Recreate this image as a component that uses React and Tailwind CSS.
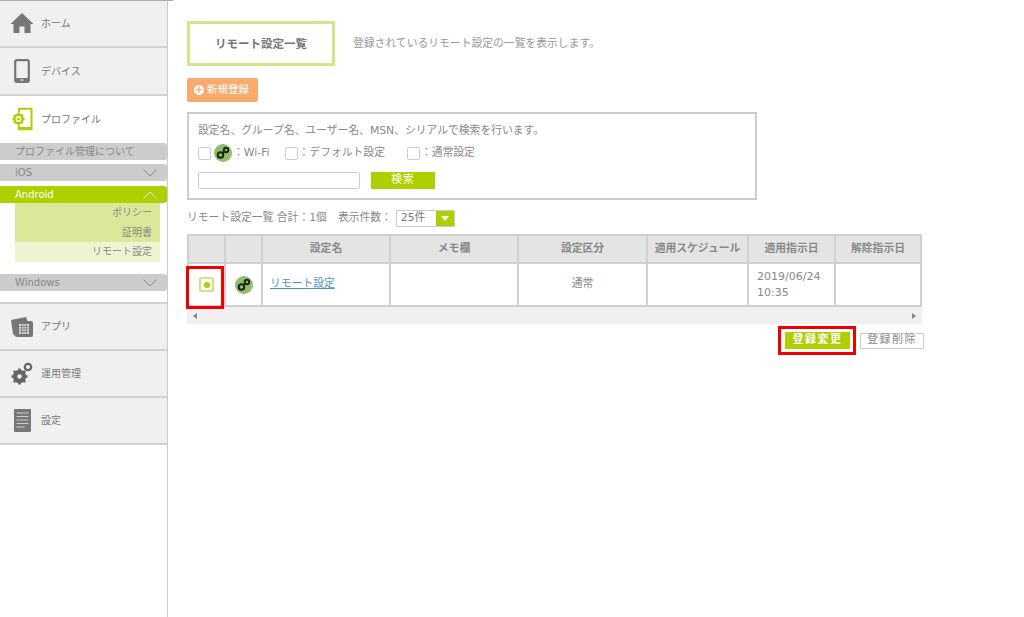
import { ChevronDown, ChevronUp } from "lucide-react";

const font = { fontFamily: '"DejaVu Sans", "Noto Sans CJK JP", sans-serif' };

function HomeIcon() {
  return (
    <svg width="24" height="22" viewBox="0 0 24 22" fill="#777">
      <path d="M12 1 L23.5 12 L20.5 12 L20.5 21 L14.5 21 L14.5 14.5 L9.5 14.5 L9.5 21 L3.5 21 L3.5 12 L0.5 12 Z" />
    </svg>
  );
}

function DeviceIcon() {
  return (
    <svg width="16" height="24" viewBox="0 0 16 24">
      <rect x="1.2" y="1.2" width="13.6" height="21.6" rx="1.5" fill="none" stroke="#777" strokeWidth="2.2" />
      <rect x="1" y="19" width="14" height="4" fill="#777" />
      <rect x="6.5" y="20.4" width="3" height="1.2" fill="#eee" />
    </svg>
  );
}

function ProfileIcon() {
  return (
    <svg width="21" height="24" viewBox="0 0 21 24">
      <path d="M7 5 V1.8 H19.5 V22.2 H7 V19" fill="none" stroke="#aecf00" strokeWidth="2" />
      <path d="M7 20h12v3H7z" fill="#aecf00" />
      <path d="M6.5 5.5v13M0.5 12h12M2.3 7.8l8.4 8.4M10.7 7.8l-8.4 8.4" stroke="#aecf00" strokeWidth="2.6" />
      <circle cx="6.5" cy="12" r="5.4" fill="#aecf00" />
      <circle cx="6.5" cy="12" r="2.9" fill="#fff" />
      <circle cx="6.5" cy="12" r="1.5" fill="#aecf00" />
    </svg>
  );
}

function AppIcon() {
  return (
    <svg width="24" height="22" viewBox="0 0 24 22">
      <path d="M1 4 L16 1 L18 6 L5 8 L5 20 L3 18 Z" fill="#777" />
      <rect x="5" y="5" width="18" height="16" rx="2" fill="#777" />
      <rect x="9" y="8" width="10" height="10" fill="#ddd" />
      <path d="M9 10.5h10M9 13h10M9 15.5h10M11.5 8v10M14 8v10M16.5 8v10" stroke="#777" strokeWidth="0.8" />
    </svg>
  );
}

function GearIcon() {
  return (
    <svg width="22" height="23" viewBox="0 0 22 23">
      <circle cx="8.5" cy="14.5" r="5" fill="none" stroke="#666" strokeWidth="3.4" />
      <path d="M8.5 6.5v16M0.5 14.5h16M2.8 8.8l11.4 11.4M14.2 8.8L2.8 20.2" stroke="#666" strokeWidth="2.6" />
      <circle cx="8.5" cy="14.5" r="2.2" fill="#eee" />
      <circle cx="17" cy="5" r="3.2" fill="none" stroke="#666" strokeWidth="2.2" />
    </svg>
  );
}

function DocIcon() {
  return (
    <svg width="17" height="23" viewBox="0 0 17 23">
      <rect width="17" height="23" rx="1" fill="#777" />
      <path d="M2.5 4h12M2.5 7.5h12M2.5 11h12M2.5 14.5h12M2.5 18h8" stroke="#ccc" strokeWidth="1" />
    </svg>
  );
}

function LinkBadge({ size = 18 }) {
  return (
    <svg width={size} height={size} viewBox="0 0 18 18">
      <circle cx="9" cy="9" r="9" fill="#8fbf6a" />
      <circle cx="6.5" cy="11" r="2.8" fill="none" stroke="#222" strokeWidth="2" />
      <circle cx="12" cy="6" r="2.2" fill="none" stroke="#222" strokeWidth="2" />
      <path d="M8.5 9 L10.5 7.5" stroke="#222" strokeWidth="2" />
    </svg>
  );
}

function NavItem({ icon, label, className = "h-[48px]" }) {
  return (
    <div className={"flex items-center bg-[#f0f0f0] border-b-2 border-[#d2d2d2] " + className}>
      <div className="w-[41px] flex justify-center pl-[3px] shrink-0">{icon}</div>
      <span className="text-[10px] text-[#777]">{label}</span>
    </div>
  );
}

function SubBar({ label, open, plain, className = "" }) {
  return (
    <div
      className={
        "flex items-center justify-between h-[17px] pl-[15px] pr-[5px] rounded-r-[3px] text-[10px] " +
        (open ? "bg-[#aecf00] text-white " : "bg-[#cccccc] text-[#888] ") +
        className
      }
    >
      <span>{label}</span>
      {!plain && (open ? <ChevronUp size={24} strokeWidth={1} color="#fff" /> : <ChevronDown size={24} strokeWidth={1} color="#888" />)}
    </div>
  );
}

function Sidebar() {
  return (
    <aside className="w-[168px] min-h-[617px] border-r border-[#cccccc] shrink-0">
      <NavItem icon={<HomeIcon />} label="ホーム" />
      <NavItem icon={<DeviceIcon />} label="デバイス" />
      <div className="flex items-center h-[46px]">
        <div className="w-[41px] flex justify-center pl-[3px] shrink-0">
          <ProfileIcon />
        </div>
        <span className="text-[10px] text-[#777]">プロファイル</span>
      </div>
      <div className="pt-[1px]">
        <SubBar label="プロファイル管理について" plain />
        <SubBar label="iOS" className="mt-[4px]" />
        <SubBar label="Android" open className="mt-[5px]" />
        <div className="ml-[15px] w-[145px] text-[10px] text-[#888] text-right">
          <div className="h-[20px] leading-[20px] pr-[8px] bg-[#dbe89a]">ポリシー</div>
          <div className="h-[19px] leading-[19px] pr-[8px] bg-[#dbe89a]">証明書</div>
          <div className="h-[20px] leading-[20px] pr-[8px] bg-[#eef4d2]">リモート設定</div>
        </div>
        <SubBar label="Windows" className="mt-[12px]" />
      </div>
      <div className="mt-[11px] border-t-2 border-[#d2d2d2]">
        <NavItem icon={<AppIcon />} label="アプリ" className="h-[47px]" />
        <NavItem icon={<GearIcon />} label="運用管理" className="h-[47px]" />
        <NavItem icon={<DocIcon />} label="設定" className="h-[47px]" />
      </div>
    </aside>
  );
}

function Check({ className = "" }) {
  return <span className={"w-[13px] h-[13px] bg-white border border-[#ccc] rounded-[2px] inline-block " + className}></span>;
}

const headers = ["", "", "設定名", "メモ欄", "設定区分", "適用スケジュール", "適用指示日", "解除指示日"];
const widths = [37, 37, 128, 128, 129, 101, 87, 84];

function Table() {
  const cell = "border-r-2 border-[#d0d0d0] last:border-r-0 shrink-0";
  return (
    <div className="w-[735px] mt-[7px]">
      <div className="flex h-[30px] bg-[#e4e4e4] border-y-2 border-x-2 border-[#d0d0d0]">
        {headers.map((h, i) => (
          <div
            key={i}
            className={"flex items-center justify-center text-[10.8px] font-bold text-[#888] " + cell}
            style={{ width: widths[i] }}
          >
            {h}
          </div>
        ))}
      </div>
      <div className="flex h-[43px] border-b-2 border-x-2 border-[#d0d0d0] text-[10.8px] text-[#888]">
        <div className={"relative flex items-center justify-center " + cell} style={{ width: widths[0] }}>
          <span className="w-[15px] h-[15px] border-2 border-[#cfe37f] rounded-[2px] flex items-center justify-center">
            <span className="w-[6px] h-[6px] rounded-full bg-[#aecf00]"></span>
          </span>
          <span className="absolute left-[-3px] top-[2px] w-[38px] h-[43px] border-[3px] border-[#f00000]"></span>
        </div>
        <div className={"flex items-center justify-center " + cell} style={{ width: widths[1] }}>
          <LinkBadge />
        </div>
        <div className={"flex items-center pl-[7px] " + cell} style={{ width: widths[2] }}>
          <a className="text-[#4d93c4] underline">リモート設定</a>
        </div>
        <div className={cell} style={{ width: widths[3] }}></div>
        <div className={"flex items-center justify-center " + cell} style={{ width: widths[4] }}>
          通常
        </div>
        <div className={cell} style={{ width: widths[5] }}></div>
        <div className={"flex items-center pl-[8px] text-[11px] leading-[16px] " + cell} style={{ width: widths[6] }}>
          2019/06/24
          <br />
          10:35
        </div>
        <div className={cell} style={{ width: widths[7] }}></div>
      </div>
      <div className="flex items-center justify-between h-[17px] px-[6px] bg-[#f0f0f0]">
        <span className="w-0 h-0 border-y-[3.5px] border-y-transparent border-r-[4px] border-r-[#888]"></span>
        <span className="w-0 h-0 border-y-[3.5px] border-y-transparent border-l-[4px] border-l-[#888]"></span>
      </div>
    </div>
  );
}

export default function App() {
  return (
    <div className="relative flex w-[1024px] h-[617px] bg-white overflow-hidden" style={font}>
      <div className="absolute top-0 left-0 w-[173px] h-[1px] bg-[#aaaaaa]"></div>
      <Sidebar />
      <main className="pl-[19px] pt-[21px] flex-1 text-[#888]">
        <div className="flex items-center">
          <div className="w-[148px] h-[45px] border-[3px] border-[#d3e48a] flex items-center justify-center pt-[2px] text-[11.5px] font-bold text-[#777]">
            リモート設定一覧
          </div>
          <p className="ml-[18px] mt-[2px] text-[10.8px] text-[#999]">登録されているリモート設定の一覧を表示します。</p>
        </div>
        <div className="mt-[12px] w-[71px] h-[24px] rounded-[2px] bg-[#f8ab6d] flex items-center pl-[7px] gap-[3px] text-[10.5px] text-white">
          <span className="w-[10px] h-[10px] rounded-full bg-white text-[#f8ab6d] flex items-center justify-center font-bold leading-none text-[10px]">+</span>
          新規登録
        </div>
        <div className="mt-[10px] w-[570px] h-[88px] border-2 border-[#cccccc] pl-[9px] pt-[9px] text-[10.8px]">
          <p className="leading-[15px]">設定名、グループ名、ユーザー名、MSN、シリアルで検索を行います。</p>
          <div className="flex items-center h-[20px] mt-[5px]">
            <Check />
            <span className="ml-[3px]"><LinkBadge /></span>
            <span className="ml-[1px]">：Wi-Fi</span>
            <Check className="ml-[15px]" />
            <span className="ml-[1px]">：デフォルト設定</span>
            <Check className="ml-[22px]" />
            <span className="ml-[1px]">：通常設定</span>
          </div>
          <div className="flex items-center mt-[9px]">
            <div className="w-[162px] h-[17px] bg-white border border-[#ccc] rounded-[2px]"></div>
            <div className="ml-[11px] w-[64px] h-[17px] bg-[#aecf00] flex items-center justify-center text-white tracking-[1px]">検索</div>
          </div>
        </div>
        <div className="flex items-center h-[17px] mt-[10px] text-[10.8px]">
          <span>リモート設定一覧 合計：1個</span>
          <span className="ml-[11px]">表示件数：</span>
          <div className="ml-[4px] w-[59px] h-[17px] border border-[#ccc] flex justify-between items-center pl-[4px]">
            <span className="text-[#777]">25件</span>
            <span className="w-[18px] h-full bg-[#aecf00] flex items-center justify-center">
              <span className="w-0 h-0 border-x-[4px] border-x-transparent border-t-[5px] border-t-white"></span>
            </span>
          </div>
        </div>
        <Table />
        <div className="w-[737px] flex justify-end items-center mt-[8px] gap-[10px] text-[11px] tracking-[1.5px]">
          <div className="relative w-[65px] h-[17px] bg-[#aecf00] text-white flex items-center justify-center font-bold">
            登録変更
            <span className="absolute left-[-7px] top-[-6px] w-[78px] h-[29px] border-[3px] border-[#f00000]"></span>
          </div>
          <div className="w-[64px] h-[16px] bg-white border border-[#ccc] flex items-center justify-center">登録削除</div>
        </div>
      </main>
    </div>
  );
}
